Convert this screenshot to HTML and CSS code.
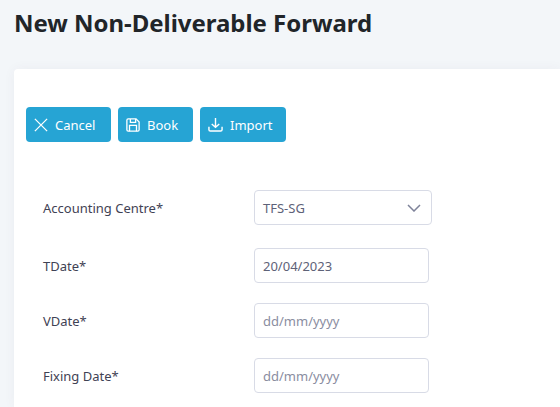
FILE: index.html
```html
<!DOCTYPE html>
<html lang="en">
<head>
<meta charset="utf-8">
<title>New Non-Deliverable Forward</title>
<link rel="stylesheet" href="styles.css">
</head>
<body>
<h1 class="title">New Non-Deliverable Forward</h1>
<main class="card">
  <div class="actions">
    <button class="btn btn-cancel" type="button">
      <svg class="icon" viewBox="0 0 16 16"><path d="M1 1l14 14M15 1l-14 14"/></svg>Cancel
    </button>
    <button class="btn btn-book" type="button">
      <svg class="icon" viewBox="0 0 16 16"><path d="M2.500 1h9l3.500 3.500v9a1.500 1.500 0 0 1-1.500 1.500h-11a1.500 1.500 0 0 1-1.500-1.500v-11a1.500 1.500 0 0 1 1.500-1.500z"/><path d="M5 1v4h6v-4"/><path d="M4 15v-6.500h8v6.500"/></svg>Book
    </button>
    <button class="btn btn-import" type="button">
      <svg class="icon icon-wide" viewBox="0 0 16 16"><path d="M8 1v10M4 7.500l4 3.500 4-3.500"/><path d="M1 10.500v3a1.500 1.500 0 0 0 1.500 1.500h11a1.500 1.500 0 0 0 1.500-1.500v-3"/></svg>Import
    </button>
  </div>
  <form class="form">
    <div class="row row-select">
      <label class="label">Accounting Centre*</label>
      <div class="control control-select">
        <span class="value">TFS-SG</span>
        <svg class="chevron" viewBox="0 0 14 8"><path d="M1 1l6 6 6-6"/></svg>
      </div>
    </div>
    <div class="row">
      <label class="label">TDate*</label>
      <div class="control"><span class="value">20/04/2023</span></div>
    </div>
    <div class="row">
      <label class="label">VDate*</label>
      <div class="control"><span class="placeholder">dd/mm/yyyy</span></div>
    </div>
    <div class="row">
      <label class="label">Fixing Date*</label>
      <div class="control"><span class="placeholder">dd/mm/yyyy</span></div>
    </div>
  </form>
</main>
</body>
</html>
```
FILE: styles.css
```css
* { box-sizing: border-box; }
html, body { height: 100%; }
body {
  margin: 0;
  height: 407px;
  overflow: hidden;
  background: #f3f6f9;
  font-family: "Noto Sans", "Open Sans", sans-serif;
  color: #3f4254;
  padding: 0 0 0 14px;
}
.title {
  margin: 0;
  padding: 6px 0 0 0;
  height: 69px;
  font-size: 24px;
  line-height: 33px;
  font-weight: 700;
  letter-spacing: -0.03px;
  color: #212529;
}
.card {
  background: #fff;
  border-radius: 4px 0 0 0;
  padding: 38px 0 0 12px;
  height: 338px;
  box-shadow: 0 0 12px rgba(82, 63, 105, 0.05);
}
.actions { display: flex; gap: 7px; }
.btn {
  display: flex;
  align-items: center;
  height: 35px;
  padding: 0 10px 0 8px;
  border: 0;
  border-radius: 4px;
  background: #26a4d4;
  color: #fff;
  font: 400 13px/18px "Noto Sans", "Open Sans", sans-serif;
}
.btn-cancel { width: 85px; }
.btn-book { width: 75px; }
.btn-import { width: 86px; }
.icon {
  width: 14px;
  height: 14px;
  margin-right: 7px;
  fill: none;
  stroke: #fff;
  stroke-width: 1.500;
}
.icon-wide { width: 15px; height: 15px; }
.form { padding: 48px 0 0 17px; }
.row { display: flex; align-items: center; height: 35px; margin-bottom: 20px; }
.row-select { margin-bottom: 23px; }
.label { width: 211px; font-size: 13px; color: #3f4254; }
.control {
  display: flex;
  align-items: center;
  justify-content: space-between;
  width: 175px;
  height: 35px;
  padding: 0 8px;
  border: 1px solid #d8dbe6;
  border-radius: 4px;
  background: #fff;
  font-size: 13px;
}
.control-select { width: 178px; }
.value { color: #5e6278; }
.placeholder { color: #8a8d9f; }
.chevron {
  width: 14px;
  height: 8px;
  margin-right: 2px;
  fill: none;
  stroke: #7e8299;
  stroke-width: 1.500;
}
```
